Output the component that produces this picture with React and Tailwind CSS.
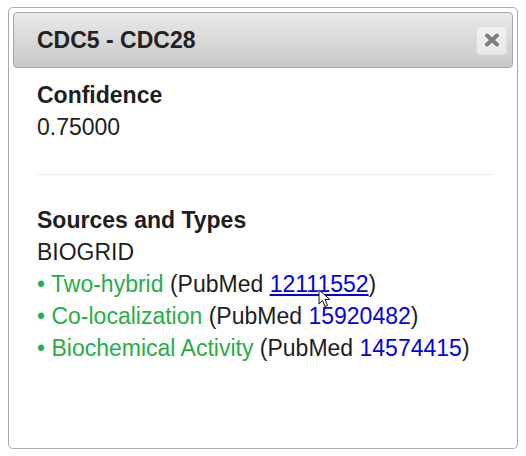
const interactions = [
    { type: "Two-hybrid", pubmed: "12111552", hover: true },
    { type: "Co-localization", pubmed: "15920482" },
    { type: "Biochemical Activity", pubmed: "14574415" },
];

const App = () => {
    return (
        <div className="bg-white min-h-screen pt-[7px] pl-[8px]" style={{ fontFamily: '"Liberation Sans", Arial, sans-serif' }}>
            <div className="w-[510px] h-[442px] border border-[#a9a9a9] rounded-[5px] p-[4px] bg-white">
                <div className="flex items-center justify-between h-[56px] pl-[23px] pr-[5px] border border-[#a6a6a6] rounded-[4px] bg-gradient-to-b from-[#e9e9e9] to-[#c9c9c9]">
                    <h2 className="text-[23px] font-bold text-[#222]">CDC5 - CDC28</h2>
                    <button className="flex items-center justify-center w-[31px] h-[29px] rounded-[4px] bg-gradient-to-b from-[#f0f0f0] to-[#e8e8e8] border border-[#dedede]">
                        <svg width="16" height="14" viewBox="0 0 16 14">
                            <path d="M3 2.5 L13 11.5 M13 2.5 L3 11.5" stroke="#7e7e7e" strokeWidth="4" strokeLinecap="round" />
                        </svg>
                    </button>
                </div>
                <div className="pl-[24px] pr-[20px] pt-[11px] text-[23px] leading-[32px] text-[#1e1e1e]">
                    <div className="font-bold">Confidence</div>
                    <div>0.75000</div>
                    <div className="h-px bg-[#ebebeb] mt-[31px] mb-[29px]" />
                    <div className="font-bold">Sources and Types</div>
                    <div>BIOGRID</div>
                    {interactions.map((it) => (
                        <div key={it.pubmed} className="relative">
                            <span className="text-[#27ae47]">• {it.type}</span> (PubMed{" "}
                            <a href="#" className={it.hover ? "text-[#0000ee] underline relative" : "text-[#0000ee]"}>
                                {it.pubmed}
                                {it.hover && (
                                    <svg className="absolute left-[48px] top-[18px]" width="14" height="20" viewBox="0 0 14 20">
                                        <path d="M1 1 L1 15 L4.5 11.5 L7 17.5 L9.5 16.5 L7 10.5 L12 10.5 Z" fill="#fff" stroke="#111" strokeWidth="1" strokeLinejoin="round" />
                                    </svg>
                                )}
                            </a>
                            )
                        </div>
                    ))}
                </div>
            </div>
        </div>
    );
};

export default App;
